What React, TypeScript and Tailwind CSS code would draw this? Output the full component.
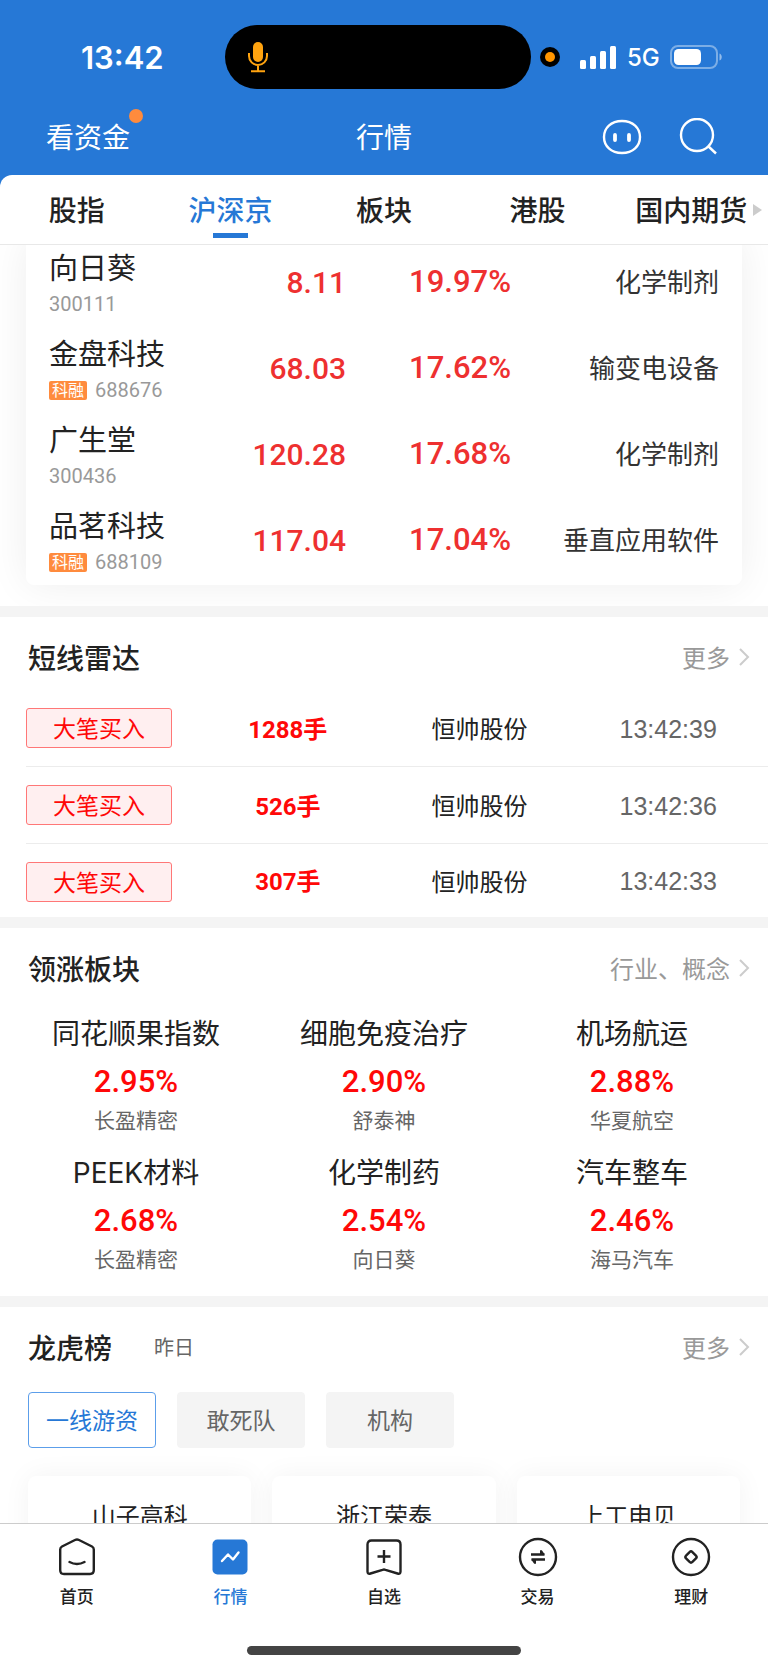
import React, { FC, ReactNode, useState } from 'react'

type Stock = {
    name: string;
    code: string;
    price: string;
    change: string;
    industry: string;
    tag?: string;
}

type Sector = {
    name: string;
    change: string;
    leader: string;
}

const tabs = ['股指', '沪深京', '板块', '港股', '国内期货'];

const stocks: Stock[] = [
    { name: '向日葵', code: '300111', price: '8.11', change: '19.97%', industry: '化学制剂' },
    { name: '金盘科技', code: '688676', price: '68.03', change: '17.62%', industry: '输变电设备', tag: '科融' },
    { name: '广生堂', code: '300436', price: '120.28', change: '17.68%', industry: '化学制剂' },
    { name: '品茗科技', code: '688109', price: '117.04', change: '17.04%', industry: '垂直应用软件', tag: '科融' },
];

const radar = [
    { type: '大笔买入', volume: '1288手', name: '恒帅股份', time: '13:42:39' },
    { type: '大笔买入', volume: '526手', name: '恒帅股份', time: '13:42:36' },
    { type: '大笔买入', volume: '307手', name: '恒帅股份', time: '13:42:33' },
];

const sectors: Sector[] = [
    { name: '同花顺果指数', change: '2.95%', leader: '长盈精密' },
    { name: '细胞免疫治疗', change: '2.90%', leader: '舒泰神' },
    { name: '机场航运', change: '2.88%', leader: '华夏航空' },
    { name: 'PEEK材料', change: '2.68%', leader: '长盈精密' },
    { name: '化学制药', change: '2.54%', leader: '向日葵' },
    { name: '汽车整车', change: '2.46%', leader: '海马汽车' },
];

const groups = ['一线游资', '敢死队', '机构'];
const winners = ['山子高科', '浙江荣泰', '上工申贝'];

const App: FC = () => {
    return (
        <div className="flex h-screen flex-col overflow-hidden bg-white font-['Noto_Sans_CJK_SC',sans-serif] text-[#222]">
            <header className="shrink-0 bg-[#2678d6]">
                <StatusBar />
                <TitleBar />
                <Tabs />
            </header>
            <main className="min-h-0 flex-1 overflow-y-auto [scrollbar-width:none]">
                <StockList />
                <Radar />
                <Sectors />
                <Billboard />
            </main>
            <BottomNav />
        </div>
    )
}

export default App;

const StatusBar: FC = () => (
    <div className="flex h-[114px] items-center pr-[45px] pl-[81px] font-['Inter',sans-serif] text-white">
        <span className="w-[144px] pt-[2px] text-[31px] font-semibold">13:42</span>
        <div className="flex h-[64px] w-[306px] items-center rounded-full bg-black pl-[22px]">
            <svg width="22" height="32" viewBox="0 0 22 32" fill="none" stroke="#ffa30f" strokeWidth="2">
                <rect x="6" y="1" width="10" height="20" rx="5" fill="#ffa30f" stroke="none" />
                <path d="M2 12v3a9 9 0 0 0 18 0v-3M11 24v6M4 30.200h14" />
            </svg>
        </div>
        <span className="ml-[9px] flex size-5 items-center justify-center rounded-full bg-black">
            <span className="size-[10px] rounded-full bg-[#ff9500]" />
        </span>
        <svg className="ml-auto" width="38" height="24" viewBox="0 0 38 24" fill="#fff">
            <rect x="1" y="15" width="6" height="9" rx="1.500" />
            <rect x="11" y="11" width="6" height="13" rx="1.500" />
            <rect x="21" y="6" width="6" height="18" rx="1.500" />
            <rect x="31" y="1" width="6" height="23" rx="1.500" />
        </svg>
        <span className="ml-[10px] w-[34px] pt-[2px] text-[24px] font-medium">5G</span>
        <svg className="ml-[9px]" width="53" height="24" viewBox="0 0 53 24" fill="none">
            <rect x="1" y="1" width="46" height="22" rx="7" stroke="#fff" strokeOpacity=".4" strokeWidth="2" />
            <rect x="4" y="4" width="27" height="16" rx="4.500" fill="#fff" />
            <path d="M49.500 8.500c3 1 3 6 0 7z" fill="#fff" fillOpacity=".5" />
        </svg>
    </div>
)

const TitleBar: FC = () => (
    <div className="grid h-[61px] grid-cols-3 items-center px-[46px] pb-4 text-[28px] text-white">
        <button className="relative justify-self-start pb-[2px] leading-[42px]">
            看资金
            <span className="absolute -top-[6px] -right-[13px] size-[14px] rounded-full bg-[#ff8b3d]" />
        </button>
        <h1 className="pb-[2px] text-center leading-[42px]">行情</h1>
        <div className="flex items-center justify-end gap-[37px] pr-[3px]">
            <button aria-label="客服">
                <svg width="40" height="38" viewBox="0 0 40 38" fill="none" stroke="#fff" strokeWidth="2.400">
                    <path d="M20 3C31 3 38 10 38 19S31 35 20 35 2 28 2 19 9 3 20 3Z" />
                    <path d="M13 17v5M27 17v5" strokeWidth="3.800" strokeLinecap="round" />
                </svg>
            </button>
            <button aria-label="搜索">
                <svg width="40" height="38" viewBox="0 0 40 38" fill="none" stroke="#fff" strokeWidth="2.400">
                    <circle cx="18" cy="17" r="16" />
                    <path d="M29 28l8 7.500" />
                </svg>
            </button>
        </div>
    </div>
)

const Tabs: FC = () => {
    const [active, setActive] = useState('沪深京');
    return (
        <nav className="relative grid h-[70px] grid-cols-5 rounded-tl-[12px] border-b border-[#e8e8e8] bg-white">
            {tabs.map((tab) => (
                <button key={tab} onClick={() => setActive(tab)}
                    className={`flex flex-col items-center pt-[14px] text-[28px] leading-[40px] font-medium whitespace-nowrap ${tab === active ? 'text-[#2678d6]' : ''}`}>
                    {tab}
                    {tab === active && <span className="mt-[4px] h-[5px] w-[35px] bg-[#2678d6]" />}
                </button>
            ))}
            <svg className="absolute top-[28px] right-[6px]" width="9" height="14" viewBox="0 0 9 14" fill="#ccc">
                <path d="M0 1l9 6-9 6z" />
            </svg>
        </nav>
    )
}

const StockList: FC = () => (
    <section className="overflow-hidden px-[26px] pb-[21px]">
        <div className="-mt-[7px] rounded-[8px] pb-[3px] shadow-[0_0_40px_rgba(0,0,0,0.07)]">
            <table className="w-full">
                <tbody>
                    {stocks.map((stock) => (
                        <tr key={stock.code} className="h-[86px]">
                            <td className="w-[174px] p-0 pl-[23px]">
                                <p className="text-[29px] leading-[40px]">{stock.name}</p>
                                <p className="flex h-[24px] items-center gap-2 mt-[6px] font-['Roboto','Noto_Sans_CJK_SC',sans-serif] text-[20px] leading-[24px] text-[#999]">
                                    {stock.tag && <span className="rounded-[2px] bg-[#ff8b3d] px-[3px] text-[16px] leading-[19px] text-white">{stock.tag}</span>}
                                    {stock.code}
                                </p>
                            </td>
                            <td className="p-0 pt-[2px] text-right font-['Roboto',sans-serif] text-[30px] font-medium text-[#ee3030]">{stock.price}</td>
                            <td className="w-[165px] p-0 pt-[3px] text-right font-['Roboto',sans-serif] text-[31px] font-medium text-[#ee3030]">{stock.change}</td>
                            <td className="w-[231px] p-0 pb-[2px] pr-[23px] text-right text-[26px] text-[#333]">{stock.industry}</td>
                        </tr>
                    ))}
                </tbody>
            </table>
        </div>
    </section>
)

type SectionProps = {
    title: string;
    more: string;
    note?: string;
    children: ReactNode;
}

const Section: FC<SectionProps> = ({ title, more, note, children }) => (
    <section className="border-t-[11px] border-[#f4f4f4] bg-white">
        <div className="flex items-center pt-[19px] pr-[18px] pb-px pl-[28px] leading-[42px]">
            <h2 className="text-[28px] font-medium">{title}</h2>
            {note && <span className="ml-[42px] text-[20px] text-[#666]">{note}</span>}
            <a href="#" className="ml-auto flex items-center gap-[9px] text-[24px] text-[#999]">
                {more}
                <svg width="11" height="18" viewBox="0 0 11 18" fill="none" stroke="#ccc" strokeWidth="2">
                    <path d="M1 1l8 8-8 8" />
                </svg>
            </a>
        </div>
        {children}
    </section>
)

const Radar: FC = () => (
    <Section title="短线雷达" more="更多">
        <div className="pt-[11px] pl-[26px]">
            <table className="w-full table-fixed text-center text-[24px]">
                <tbody>
                    {radar.map((item) => (
                        <tr key={item.time} className="group border-b border-[#ececec] last:border-0">
                            <td className="w-[167px] p-0 pt-[18px] pb-[18px] group-last:pb-[15px]">
                                <div className="w-[146px] rounded-[3px] border border-[#ff7777] bg-[#ffeff0] pb-[2px] text-[23px] leading-[36px] text-[#ff0808]">{item.type}</div>
                            </td>
                            <td className="p-0 pt-[3px] pr-[2px] font-['Roboto','Noto_Sans_CJK_SC',sans-serif] font-bold text-[#ff0808]">{item.volume}</td>
                            <td className="p-0 pr-[2px]">{item.name}</td>
                            <td className="p-0 pt-[3px] pr-[8px] font-['Liberation_Sans',sans-serif] text-[25px] text-[#666]">{item.time}</td>
                        </tr>
                    ))}
                </tbody>
            </table>
        </div>
    </Section>
)

const Sectors: FC = () => (
    <Section title="领涨板块" more="行业、概念">
        <ul className="grid grid-cols-3 gap-y-5 px-3 pt-[24px] pb-[24px] text-center">
            {sectors.map((sector) => (
                <li key={sector.name}>
                    <p className="font-['Inter','Noto_Sans_CJK_SC',sans-serif] text-[28px] leading-[40px]">{sector.name}</p>
                    <p className="mt-[8px] font-['Roboto',sans-serif] text-[31px] leading-[40px] font-medium text-[#ff0808]">{sector.change}</p>
                    <p className="mt-[3px] text-[21px] leading-[28px] text-[#666]">{sector.leader}</p>
                </li>
            ))}
        </ul>
    </Section>
)

const Billboard: FC = () => {
    const [group, setGroup] = useState('一线游资');
    return (
        <Section title="龙虎榜" more="更多" note="昨日">
            <div className="flex gap-[21px] px-[28px] pt-[23px]">
                {groups.map((item) => (
                    <button key={item} onClick={() => setGroup(item)}
                        className={`h-[56px] w-[128px] rounded-[4px] border pb-[2px] text-[23px] ${item === group ? 'border-[#5c9eea] bg-white text-[#2678d6]' : 'border-[#f4f4f4] bg-[#f4f4f4] text-[#666]'}`}>
                        {item}
                    </button>
                ))}
            </div>
            <div className="grid grid-cols-3 gap-[21px] px-[28px] pt-[28px] pb-8 text-center">
                {winners.map((name) => (
                    <div key={name} className="h-[150px] rounded-[8px] bg-white pt-5 text-[24px] leading-[38px] shadow-[0_0_28px_rgba(0,0,0,0.05)]">{name}</div>
                ))}
            </div>
        </Section>
    )
}

const navItems = [
    {
        label: '首页',
        icon: <>
            <path d="M5 10.500L18 4Q20 3 22 4L35 10.500Q36.800 11.500 36.800 13.500V34Q36.800 38 33 38H7Q3.200 38 3.200 34V13.500Q3.200 11.500 5 10.500Z" />
            <path d="M12.500 26q7.500 4 15 0" strokeLinecap="round" />
        </>,
    },
    {
        label: '行情',
        icon: <>
            <rect x="2.500" y="3.500" width="35" height="35" rx="5" fill="#2678d6" stroke="none" />
            <path d="M12 25l6-6.500 5 5 5.500-7" stroke="#fff" strokeLinecap="round" strokeLinejoin="round" />
        </>,
    },
    {
        label: '自选',
        icon: <>
            <path d="M7.500 4.500H32.500Q36.500 4.500 36.500 8.500V35.500Q36.500 38.500 33.500 37.500L21.500 33.800Q20 33.300 18.500 33.800L6.500 37.500Q3.500 38.500 3.500 35.500V8.500Q3.500 4.500 7.500 4.500Z" />
            <path d="M20 14v13M13.500 20.500h13" />
        </>,
    },
    {
        label: '交易',
        icon: <>
            <circle cx="20" cy="21" r="18" />
            <path d="M13 18.500h13.500M27 23.500H13.500" />
            <path d="M22 14.500q1-.8 2 0l2.800 4-4.800-.5zM18 27.500q-1 .8-2 0l-2.800-4 4.800.5z" fill="#222" stroke="none" />
        </>,
    },
    {
        label: '理财',
        icon: <>
            <circle cx="20" cy="21" r="18" />
            <rect x="15.500" y="16.500" width="9" height="9" rx="2" transform="rotate(45 20 21)" />
        </>,
    },
];

const BottomNav: FC = () => (
    <footer className="shrink-0 border-t border-[#ccc] bg-white pt-3 pb-[14px]">
        <nav className="grid grid-cols-5">
            {navItems.map(({ label, icon }) => (
                <a key={label} href="#" className={`flex flex-col items-center gap-[4px] text-[17px] leading-[28px] font-medium ${label === '行情' ? 'text-[#2678d6]' : ''}`}>
                    <svg width="40" height="42" viewBox="0 0 40 42" fill="none" stroke="#222" strokeWidth="2.400">{icon}</svg>
                    {label}
                </a>
            ))}
        </nav>
        <div className="mx-auto mt-[36px] h-[9px] w-[274px] rounded-full bg-[#444]" />
    </footer>
)
